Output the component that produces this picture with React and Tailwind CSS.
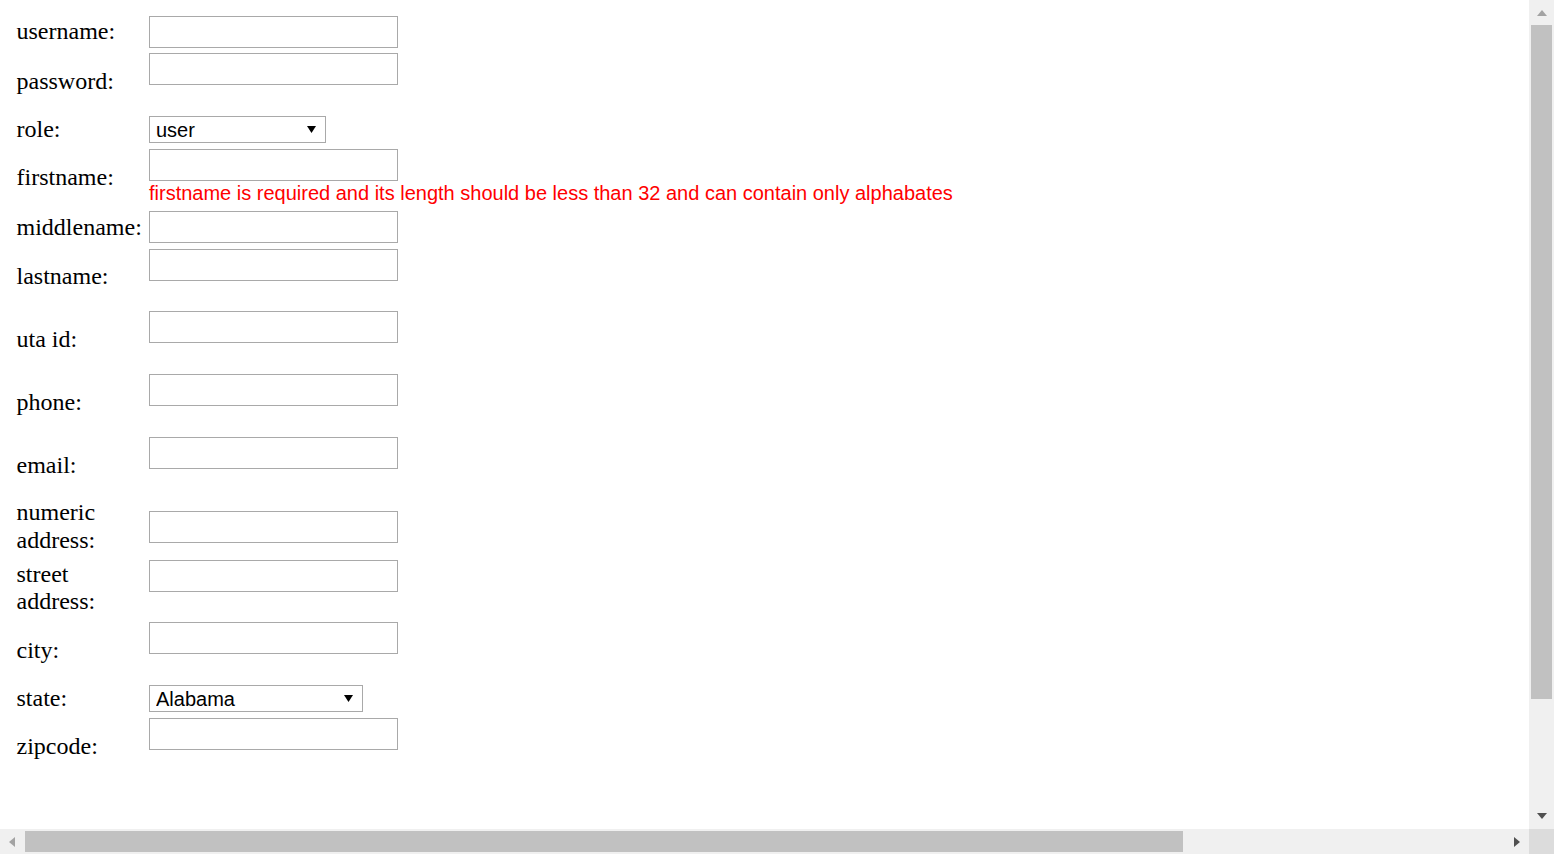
import { useState } from "react";

const ERROR_FIRSTNAME =
  "firstname is required and its length should be less than 32 and can contain only alphabates";

const STATES = ["Alabama", "Alaska", "Arizona", "Arkansas", "California", "Colorado", "Texas"];

const fields = [
  { name: "username", label: "username:" },
  { name: "password", label: "password:", type: "password", hint: true },
  { name: "role", label: "role:", select: ["user", "admin"], width: "w-[177px]" },
  { name: "firstname", label: "firstname:", hint: true, error: ERROR_FIRSTNAME },
  { name: "middlename", label: "middlename:" },
  { name: "lastname", label: "lastname:", hint: true },
  { name: "utaid", label: "uta id:", hint: true },
  { name: "phone", label: "phone:", hint: true },
  { name: "email", label: "email:", hint: true },
  { name: "numaddress", label: "numeric address:" },
  { name: "streetaddress", label: "street address:", hint: true },
  { name: "city", label: "city:", hint: true },
  { name: "state", label: "state:", select: STATES, width: "w-[214px]" },
  { name: "zipcode", label: "zipcode:", hint: true },
];

function Arrow({ dir, color }) {
  // little scrollbar triangles
  const pts = {
    up: "0,6 5,0 10,6",
    down: "0,0 10,0 5,6",
    left: "6,0 6,10 0,5",
    right: "0,0 0,10 6,5",
  }[dir];
  const vertical = dir === "up" || dir === "down";
  return (
    <svg
      width={vertical ? 10 : 6}
      height={vertical ? 6 : 10}
      viewBox={vertical ? "0 0 10 6" : "0 0 6 10"}
    >
      <polygon points={pts} fill={color} />
    </svg>
  );
}

function SelectBox({ options, width, value, onChange }) {
  return (
    <div className={`relative h-[27px] ${width}`}>
      <select
        value={value}
        onChange={(e) => onChange(e.target.value)}
        className="h-full w-full appearance-none border border-[#a9a9a9] bg-white pl-[6px] pt-[1px] font-['Liberation_Sans',Arial,sans-serif] text-[20px] leading-[1.15] text-black outline-none"
      >
        {options.map((o) => (
          <option key={o} value={o}>
            {o}
          </option>
        ))}
      </select>
      <svg
        className="pointer-events-none absolute right-[10px] top-[10px]"
        width="9"
        height="7"
        viewBox="0 0 9 7"
      >
        <polygon points="0,0 9,0 4.5,7" fill="#000" />
      </svg>
    </div>
  );
}

function Field({ field, value, onChange }) {
  if (field.select) {
    return (
      <SelectBox
        options={field.select}
        width={field.width}
        value={value}
        onChange={onChange}
      />
    );
  }
  return (
    <div className={field.hint ? "h-[57.5px]" : "h-[32px]"}>
      <input
        type={field.type || "text"}
        value={value}
        onChange={(e) => onChange(e.target.value)}
        className="block h-[32px] w-[249px] border border-[#a9a9a9] bg-white px-[3px] font-['Liberation_Sans',Arial,sans-serif] text-[20px] outline-none"
      />
      {field.error && (
        <div className="mt-[1px] whitespace-nowrap font-['Liberation_Sans',Arial,sans-serif] text-[20px] leading-[23px] text-[#ff0000]">
          {field.error}
        </div>
      )}
    </div>
  );
}

export default function App() {
  const [form, setForm] = useState({ role: "user", state: "Alabama" });

  const update = (name) => (v) => setForm((f) => ({ ...f, [name]: v }));

  return (
    <div className="flex h-[854px] w-[1554px] flex-col overflow-hidden bg-white">
      <div className="flex h-[829px]">
        {/* page */}
        <div className="flex-1 overflow-hidden">
          <form className="flex flex-col gap-[5.2px] pl-[16.5px] pt-[16px]">
            {fields.map((f) => (
              <div key={f.name} className="flex items-center">
                <div className="w-[128px] shrink-0 font-['Liberation_Serif','Times_New_Roman',serif] text-[24px] leading-[1.15] text-black">
                  {f.label}
                </div>
                <div className="ml-[4.5px]">
                  <Field field={f} value={form[f.name] || ""} onChange={update(f.name)} />
                </div>
              </div>
            ))}
          </form>
        </div>

        {/* vertical scrollbar */}
        <div className="flex w-[25px] flex-col bg-[#f0f0f0]">
          <div className="flex h-[25px] items-center justify-center pt-[1px]">
            <Arrow dir="up" color="#a3a3a3" />
          </div>
          <div className="flex-1">
            <div className="ml-[2px] h-[674px] w-[21px] bg-[#c1c1c1]" />
          </div>
          <div className="flex h-[25px] items-center justify-center pb-[2px]">
            <Arrow dir="down" color="#505050" />
          </div>
        </div>
      </div>

      {/* horizontal scrollbar */}
      <div className="flex h-[25px]">
        <div className="flex flex-1 bg-[#f0f0f0]">
          <div className="flex w-[25px] items-center justify-center pr-[1px]">
            <Arrow dir="left" color="#a3a3a3" />
          </div>
          <div className="flex-1">
            <div className="mt-[2px] h-[21px] w-[1158px] bg-[#c1c1c1]" />
          </div>
          <div className="flex w-[25px] items-center justify-center">
            <Arrow dir="right" color="#505050" />
          </div>
        </div>
        <div className="w-[25px] bg-[#dcdcdc]" />
      </div>
    </div>
  );
}
